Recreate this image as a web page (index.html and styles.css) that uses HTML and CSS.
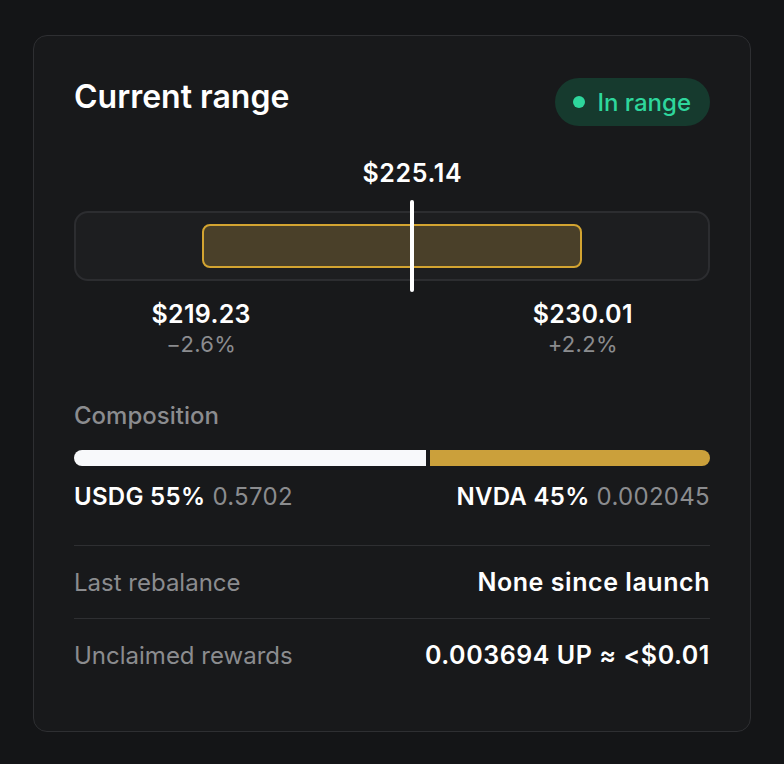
FILE: index.html
```html
<!DOCTYPE html>
<html lang="en">
<head>
<meta charset="utf-8">
<title>Current range</title>
<link rel="stylesheet" href="styles.css">
</head>
<body>
  <section class="card">
    <header class="card-head">
      <h2 class="title">Current range</h2>
      <span class="pill"><span class="pill-dot"></span>In range</span>
    </header>

    <div class="range">
      <div class="range-top">
        <span class="price current" style="left: 53.2%">$225.14</span>
      </div>
      <div class="track">
        <div class="band" style="left: 20%; width: 60%"></div>
        <div class="marker" style="left: 53.2%"></div>
      </div>
      <div class="range-bottom">
        <div class="bound" style="left: 20%">
          <span class="price">$219.23</span>
          <span class="delta">−2.6%</span>
        </div>
        <div class="bound" style="left: 80%">
          <span class="price">$230.01</span>
          <span class="delta">+2.2%</span>
        </div>
      </div>
    </div>

    <div class="composition">
      <div class="section-label">Composition</div>
      <div class="comp-bar">
        <div class="comp-seg comp-usdg" style="width: 55.4%"></div>
        <div class="comp-seg comp-nvda"></div>
      </div>
      <div class="comp-legend">
        <span><b>USDG 55%</b> <span class="muted">0.5702</span></span>
        <span><b>NVDA 45%</b> <span class="muted">0.002045</span></span>
      </div>
    </div>

    <div class="rows">
      <div class="row">
        <span class="row-label">Last rebalance</span>
        <span class="row-value">None since launch</span>
      </div>
      <div class="row">
        <span class="row-label">Unclaimed rewards</span>
        <span class="row-value">0.003694 UP ≈ &lt;$0.01</span>
      </div>
    </div>
  </section>
</body>
</html>
```

FILE: styles.css
```css
* { box-sizing: border-box; }

html, body {
  margin: 0;
  padding: 0;
  background: #141517;
}

body {
  display: flex;
  justify-content: center;
  padding-top: 35px;
  font-family: Inter, "Noto Sans", "Liberation Sans", sans-serif;
  color: #ffffff;
}

.card {
  width: 718px;
  background: #18191b;
  border: 1px solid #2e2f32;
  border-radius: 14px;
  padding: 42px 40px 40px;
}

.card-head {
  display: flex;
  align-items: flex-start;
  justify-content: space-between;
  height: 48px;
}

.title {
  margin: 0;
  font-size: 32px;
  line-height: 38px;
  font-weight: 600;
}

.pill {
  display: inline-flex;
  align-items: center;
  gap: 12px;
  height: 48px;
  padding: 0 19px 0 18px;
  border-radius: 24px;
  background: #163a2e;
  color: #2ed69c;
  font-size: 24px;
  font-weight: 500;
}

.pill-dot {
  width: 12px;
  height: 12px;
  border-radius: 50%;
  background: #2ed69c;
}

.range {
  margin-top: 32px;
}

.range-top {
  position: relative;
  height: 32px;
}

.price {
  font-size: 25px;
  font-weight: 600;
  line-height: 30px;
  letter-spacing: 0.3px;
  white-space: nowrap;
}

.current {
  position: absolute;
  top: 0;
  letter-spacing: 0.6px;
  transform: translateX(-50%);
}

.track {
  position: relative;
  margin-top: 21px;
  height: 70px;
  border: 2px solid #2c2d30;
  border-radius: 14px;
  background: #1d1e20;
}

.band {
  position: absolute;
  top: 11px;
  bottom: 11px;
  border: 2px solid #d3a431;
  border-radius: 8px;
  background: #4a4029;
}

.marker {
  position: absolute;
  top: -13px;
  bottom: -13px;
  width: 4px;
  transform: translateX(-50%);
  border-radius: 2px;
  background: #ffffff;
}

.range-bottom {
  position: relative;
  height: 80px;
  margin-top: 18px;
}

.bound {
  position: absolute;
  top: 0;
  transform: translateX(-50%);
  display: flex;
  flex-direction: column;
  align-items: center;
}

.delta {
  color: #8b8c8f;
  font-size: 22px;
  letter-spacing: 0.3px;
  line-height: 30px;
  white-space: nowrap;
}

.composition {
  margin-top: 22px;
}

.section-label {
  color: #8b8c8f;
  font-size: 24px;
  font-weight: 500;
  line-height: 30px;
}

.comp-bar {
  display: flex;
  gap: 4px;
  height: 16px;
  margin-top: 19px;
}

.comp-seg { height: 16px; }

.comp-usdg {
  background: #f8f9fb;
  border-radius: 8px 0 0 8px;
}

.comp-nvda {
  flex: 1;
  background: #cba03b;
  border-radius: 0 8px 8px 0;
}

.comp-legend {
  display: flex;
  justify-content: space-between;
  margin-top: 16px;
  font-size: 24px;
  letter-spacing: 0.3px;
  line-height: 30px;
}

.comp-legend b { font-weight: 600; }

.muted {
  color: #8b8c8f;
  font-weight: 400;
}

.rows {
  margin-top: 33px;
}

.row {
  display: flex;
  align-items: center;
  justify-content: space-between;
  height: 73px;
  border-top: 1px solid #2e2f32;
}

.row-label {
  color: #8b8c8f;
  font-size: 24px;
  font-weight: 400;
}

.row-value {
  font-size: 25px;
  font-weight: 600;
  letter-spacing: 0.55px;
}
```
